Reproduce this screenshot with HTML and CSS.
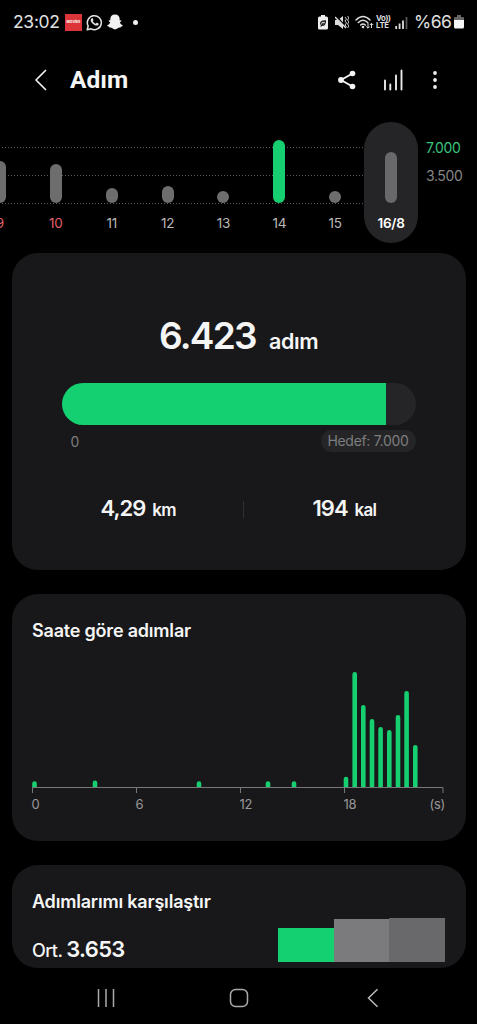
FILE: index.html
```html
<!DOCTYPE html>
<html lang="tr">
<head>
<meta charset="utf-8">
<title>Adım</title>
<link rel="stylesheet" href="styles.css">
</head>
<body>
<div class="screen">
  <div class="status">
    <span class="clock">23:02</span>
    <span class="app-badge">MOVİES</span>
    <svg class="ic-chat" width="17" height="17" viewBox="0 0 17 17"><path d="M1.2 15.8l1-3.8A7 7 0 1 1 5 14.8z" fill="none" stroke="#e4e4e4" stroke-width="1.5" stroke-linejoin="round"/><path d="M5.6 4.4c.5-.5 1-.4 1.2.1l.6 1.4c.1.4-.5.9-.7 1.2.5 1.2 1.6 2.1 2.9 2.7.5-.4.9-1.2 1.4-1l1.5.8c.4.2.2 1-.2 1.5-1.9 1.9-7.6-1.900-7.600-4.900 0-.8.4-1.400.9-1.800z" fill="#e4e4e4"/></svg>
    <svg class="ic-ghost" width="16" height="16" viewBox="0 0 16 16"><path d="M8 .4c3 0 4.700 1.900 4.700 4.500v1.500l1.200-.1c.9.2.4 1.300-1.100 2 .5 1.500 1.500 2.500 3 3 .2.900-1 1.200-2 1.400l-.4 1c-1-.2-1.900-.1-2.700.6-.8.600-1.800 1.100-2.700 1.100s-1.900-.5-2.700-1.100c-.8-.7-1.700-.8-2.700-.6l-.4-1c-1-.2-2.200-.5-2-1.400 1.500-.5 2.500-1.500 3-3C1.700 7.600 1.200 6.500 2.100 6.300l1.200.1V4.900C3.300 2.300 5 .4 8 .4z" fill="#f2f2f2"/></svg>
    <i class="more-dot"></i>
    <div class="status-right">
      <svg width="10" height="15" viewBox="0 0 10 15"><path d="M3 0h4v1.500h1.500A1.500 1.500 0 0 1 10 3v10a1.500 1.500 0 0 1-1.500 1.500h-7A1.500 1.500 0 0 1 0 13V3a1.500 1.500 0 0 1 1.500-1.500H3z" fill="#eee"/><path d="M2.700 9.500C2 7 4 5.700 7.400 5.800c.1 2.900-1.200 5-3.700 4.300L2.700 11.500M3.700 10.100l1.800-2.200" fill="none" stroke="#111" stroke-width="1.200"/></svg>
      <svg class="ic-mute" width="14" height="15" viewBox="0 0 14 15"><path d="M0 5h3l5-4v13l-5-4H0z" fill="#ddd"/><path d="M1.500 1.500l10 11" stroke="#000" stroke-width="1.600"/><path d="M0 2l11 11" stroke="#ddd" stroke-width="1.500"/><path d="M10 2l1.500 2L10 6l1.500 2L10 10l1.500 2M12.500 1L14 3l-1.500 2L14 7l-1.500 2L14 11l-1.500 2" fill="none" stroke="#ccc"/></svg>
      <svg class="ic-wifi" width="19" height="15" viewBox="0 0 19 15"><g fill="none" stroke="#ddd" stroke-width="1.500" stroke-linecap="round"><path d="M1 5Q8 -2 15 5M3.300 7.500Q8 3 12.700 7.500M5.700 10Q8 8 10.300 10"/></g><circle cx="8" cy="12" r="1.300" fill="#ddd"/><path d="M13 8v5M11.300 11.500l1.700 1.700 1.700-1.700M16.500 13V8.500M14.800 10l1.700-1.700 1.700 1.700" fill="none" stroke="#ddd" stroke-width="1"/></svg>
      <span class="lte"><b>Vo))</b><b>LTE</b></span>
      <svg class="ic-signal" width="13" height="13" viewBox="0 0 13 13"><path d="M1.200 10v3M4.600 7.500V13M8 4.500V13" stroke="#ddd" stroke-width="1.800"/><path d="M11.500 1v12" stroke="#555" stroke-width="1.800"/></svg>
      <span class="percent">%66</span>
      <svg class="ic-batt" width="10" height="14" viewBox="0 0 10 14"><path d="M3 0h4v2h2q1 0 1 1v3H0V3q0-1 1-1h2z" fill="#666"/><path d="M0 5h10v7q0 1.500-1.500 1.500h-7Q0 13.500 0 12z" fill="#f5f5f5"/></svg>
    </div>
  </div>

  <header class="header">
    <svg class="back" width="13" height="24" viewBox="0 0 13 24"><path d="M11.500 2.500L2 12l9.500 9.500" fill="none" stroke="#eee" stroke-width="1.700" stroke-linecap="round" stroke-linejoin="round"/></svg>
    <h1 class="title">Adım</h1>
    <svg width="18" height="20" viewBox="0 0 18 20"><path d="M14.500 3.500L3 10l11.500 6.500" fill="none" stroke="#f4f4f4" stroke-width="1.900"/><g fill="#f4f4f4"><circle cx="14.500" cy="3.500" r="2.800"/><circle cx="3" cy="10" r="2.900"/><circle cx="14.500" cy="16.500" r="2.800"/></g></svg>
    <svg class="ic-bars" width="20" height="22" viewBox="0 0 20 22"><g stroke="#e8e8e8" stroke-width="1.900" stroke-linecap="round"><path d="M2 11.500v9M7.300 15.500v5M13 6.500v14M18.500 1.500v19"/></g></svg>
    <svg class="ic-more" width="6" height="20" viewBox="0 0 6 20"><g fill="#eee"><circle cx="3" cy="3" r="1.900"/><circle cx="3" cy="10" r="1.900"/><circle cx="3" cy="17" r="1.900"/></g></svg>
  </header>

  <section class="week">
    <div class="days">
      <div class="day sunday"><i class="bar" style="height:42px"></i><span>9</span></div>
      <div class="day sunday"><i class="bar" style="height:39.5px"></i><span>10</span></div>
      <div class="day"><i class="bar" style="height:15px"></i><span>11</span></div>
      <div class="day"><i class="bar" style="height:17.500px"></i><span>12</span></div>
      <div class="day"><i class="bar" style="height:12px"></i><span>13</span></div>
      <div class="day reached"><i class="bar" style="height:63.500px"></i><span>14</span></div>
      <div class="day"><i class="bar" style="height:12px"></i><span>15</span></div>
      <div class="day today"><i class="bar" style="height:51.500px"></i><span>16/8</span></div>
    </div>
    <div class="scale"><span class="goal">7.000</span><span>3.500</span></div>
  </section>

  <section class="card summary">
    <div class="total"><b>6.423</b><span>adım</span></div>
    <div class="track"><i class="fill"></i></div>
    <div class="range"><span class="zero">0</span><span class="target">Hedef: 7.000</span></div>
    <div class="stats">
      <div class="stat"><b>4,29</b><span>km</span></div>
      <i class="divider"></i>
      <div class="stat kal"><b>194</b><span>kal</span></div>
    </div>
  </section>

  <section class="card hourly">
    <h2>Saate göre adımlar</h2>
    <svg class="hours" width="415" height="150" viewBox="30 665 415 150">
      <g stroke="#16cf70" stroke-width="4.600">
        <path d="M354.700 788V674.300M363.300 788V707.300M372 788V721.300M380.600 788V729.300M389.300 788V732.300M398 788V717.300M406.600 788V693.300M415.300 788V747.300" stroke-linecap="round"/>
        <path d="M34.500 788v-4.500M95 788v-5.300M199 788v-4.500M268 788v-4.500M294 788v-4.500M346 788v-9" stroke-linecap="round"/>
      </g>
      <path d="M32 788h412v6H32z" fill="#18181a"/>
      <path d="M32.500 793v-5.500h410.500V793M136.500 788v5M240.500 788v5M344.500 788v5" fill="none" stroke="#77777a"/>
      <g class="axis"><text x="31.500" y="809">0</text><text x="135.500" y="809">6</text><text x="239.500" y="809">12</text><text x="343.500" y="809">18</text><text x="429.500" y="808.500">(s)</text></g>
    </svg>
  </section>

  <section class="card compare">
    <h2>Adımlarımı karşılaştır</h2>
    <div class="compare-row">
      <div class="average"><span>Ort.</span><b>3.653</b></div>
      <div class="blocks"><i class="mine"></i><i class="peers"></i><i class="all"></i></div>
    </div>
  </section>

  <nav class="nav">
    <svg width="18" height="20" viewBox="0 0 18 20"><path d="M1.500 1v18M9 1v18M16.500 1v18" stroke="#aaa" stroke-width="1.500"/></svg>
    <svg class="home" width="20" height="20" viewBox="0 0 20 20"><rect x="1.500" y="1.500" width="17" height="17" rx="5" fill="none" stroke="#aaa" stroke-width="1.500"/></svg>
    <svg width="12" height="20" viewBox="0 0 12 20"><path d="M10.500 1.200L1.500 10l9 8.800" fill="none" stroke="#bbb" stroke-width="1.500"/></svg>
  </nav>
</div>
</body>
</html>
```
FILE: styles.css
```css
* { box-sizing: border-box; }
body { margin: 0; background: #000; color: #f5f5f5; font-family: Inter, Roboto, sans-serif; }
.screen { width: 477px; height: 1024px; overflow: hidden; background: #000; display: flex; flex-direction: column; }
svg { display: block; flex: none; }
h1, h2 { margin: 0; }

.status { height: 44px; flex: none; display: flex; align-items: center; padding-left: 13px; padding-right: 13px; }
.clock { width: 52px; font-size: 17.500px; line-height: 20px; letter-spacing: -0.300px; color: #e0e0e0; }
.app-badge { width: 17px; height: 17px; background: #dc3539; color: #fff; font-size: 3.500px; font-weight: 700; line-height: 17px; text-align: center; }
.ic-chat { margin-left: 4px; }
.ic-ghost { margin-left: 4px; }
.more-dot { width: 5px; height: 5px; margin-left: 10px; border-radius: 50%; background: #eee; }
.status-right { margin-left: auto; display: flex; align-items: center; }
.ic-mute { margin-left: 7px; }
.ic-wifi { margin-left: 6px; }
.lte { display: flex; flex-direction: column; width: 15px; margin-left: 2px; font-size: 7.800px; line-height: 7.500px; color: #ddd; letter-spacing: -0.300px; }
.ic-signal { margin-left: 4px; }
.percent { width: 38px; margin-left: 6px; font-size: 17.500px; line-height: 20px; letter-spacing: -0.500px; color: #e0e0e0; }
.ic-batt { margin-left: 2px; }

.header { height: 72px; flex: none; display: flex; align-items: center; padding: 0 39px 0 34px; }
.title { flex: 1; margin-left: 23px; font-family: Roboto, sans-serif; font-size: 24.500px; line-height: 28px; font-weight: 700; }
.ic-bars { margin-left: 27px; }
.ic-more { margin-left: 29px; }

.week { height: 137px; flex: none; display: flex; padding-top: 6px; overflow: hidden; }
.days {
  flex: none; width: 447px; height: 121px; margin-left: -28px; display: grid; grid-template-columns: repeat(8, 1fr);
  --dots: repeating-linear-gradient(90deg, #5a5a5a 0 1px, transparent 1px 3px);
  background: var(--dots) 0 25px / 391px 1px no-repeat, var(--dots) 0 53px / 391px 1px no-repeat, var(--dots) 0 81px / 391px 1px no-repeat;
}
.day { display: flex; flex-direction: column; align-items: center; justify-content: flex-end; padding-bottom: 12px; font-size: 13.500px; color: #b9b9b9; }
.bar { width: 12px; border-radius: 6px; background: #6d6d6d; }
.day span { margin-top: 12px; line-height: 16px; letter-spacing: -0.200px; }
.sunday { color: #e4606c; }
.reached .bar { background: #16cf70; }
.today { width: 54px; justify-self: center; border-radius: 27px; background: #252527; color: #fff; font-weight: 600; }
.today .bar { background: #69696c; }
.scale { display: flex; flex-direction: column; gap: 12px; padding: 18px 0 0 7px; font-size: 14px; line-height: 16px; letter-spacing: -0.400px; color: #868686; }
.goal { color: #39c47c; }

.card { flex: none; margin: 0 11.500px 24px; border-radius: 26px; background: #18181a; }
.card h2 { font-size: 18px; line-height: 24px; font-weight: 600; letter-spacing: -0.200px; }

.summary { height: 317px; padding: 61px 50px 0; }
.total { display: flex; align-items: baseline; justify-content: center; gap: 13px; height: 44px; line-height: 44px; }
.total b { font-size: 37px; font-weight: 600; letter-spacing: -1.700px; }
.total span { font-size: 21.500px; font-weight: 600; letter-spacing: -0.400px; }
.track { height: 42px; margin-top: 25px; border-radius: 21px; background: #252528; overflow: hidden; }
.fill { display: block; width: 91.760%; height: 100%; background: #14d070; }
.range { display: flex; justify-content: space-between; align-items: center; height: 22px; margin-top: 5px; padding-left: 9px; font-size: 14px; color: #7d7d7f; }
.target { width: 95px; height: 22px; border-radius: 11px; background: #252527; line-height: 22px; text-align: center; letter-spacing: -0.300px; white-space: nowrap; }
.stats { display: flex; align-items: center; height: 24px; margin-top: 45px; }
.stat { display: flex; align-items: baseline; gap: 7px; margin-left: 39px; width: 142px; line-height: 24px; font-weight: 600; }
.stat b { font-size: 22px; font-weight: 600; letter-spacing: -1px; }
.stat span { font-size: 17px; letter-spacing: -0.700px; }
.divider { width: 1px; height: 17px; background: #303033; }
.kal { margin-left: 69px; width: auto; }

.hourly { height: 247px; padding: 25px 0 0 20.500px; }
.hours { margin: 22px 0 0 -2px; }
.axis { font-size: 13px; fill: #98989a; letter-spacing: -0.300px; }

.compare { height: 103px; margin-bottom: 0; padding: 25px 20.500px 0; overflow: hidden; }
.compare-row { display: flex; justify-content: space-between; align-items: flex-end; height: 48px; }
.average { display: flex; align-items: baseline; gap: 4px; line-height: 24px; margin-bottom: -1px; }
.average span { font-size: 18px; font-weight: 500; letter-spacing: -0.600px; }
.average b { font-size: 22px; font-weight: 600; letter-spacing: -0.700px; }
.blocks { display: flex; align-items: flex-end; }
.blocks i { width: 55.700px; }
.mine { height: 34px; background: #14d070; }
.peers { height: 43px; background: #7b7b7d; }
.all { height: 44px; background: #69696b; }

.nav { height: 56px; display: flex; align-items: center; padding: 4px 98px 0 96.500px; justify-content: space-between; }
.home { margin-right: 4px; }
```
